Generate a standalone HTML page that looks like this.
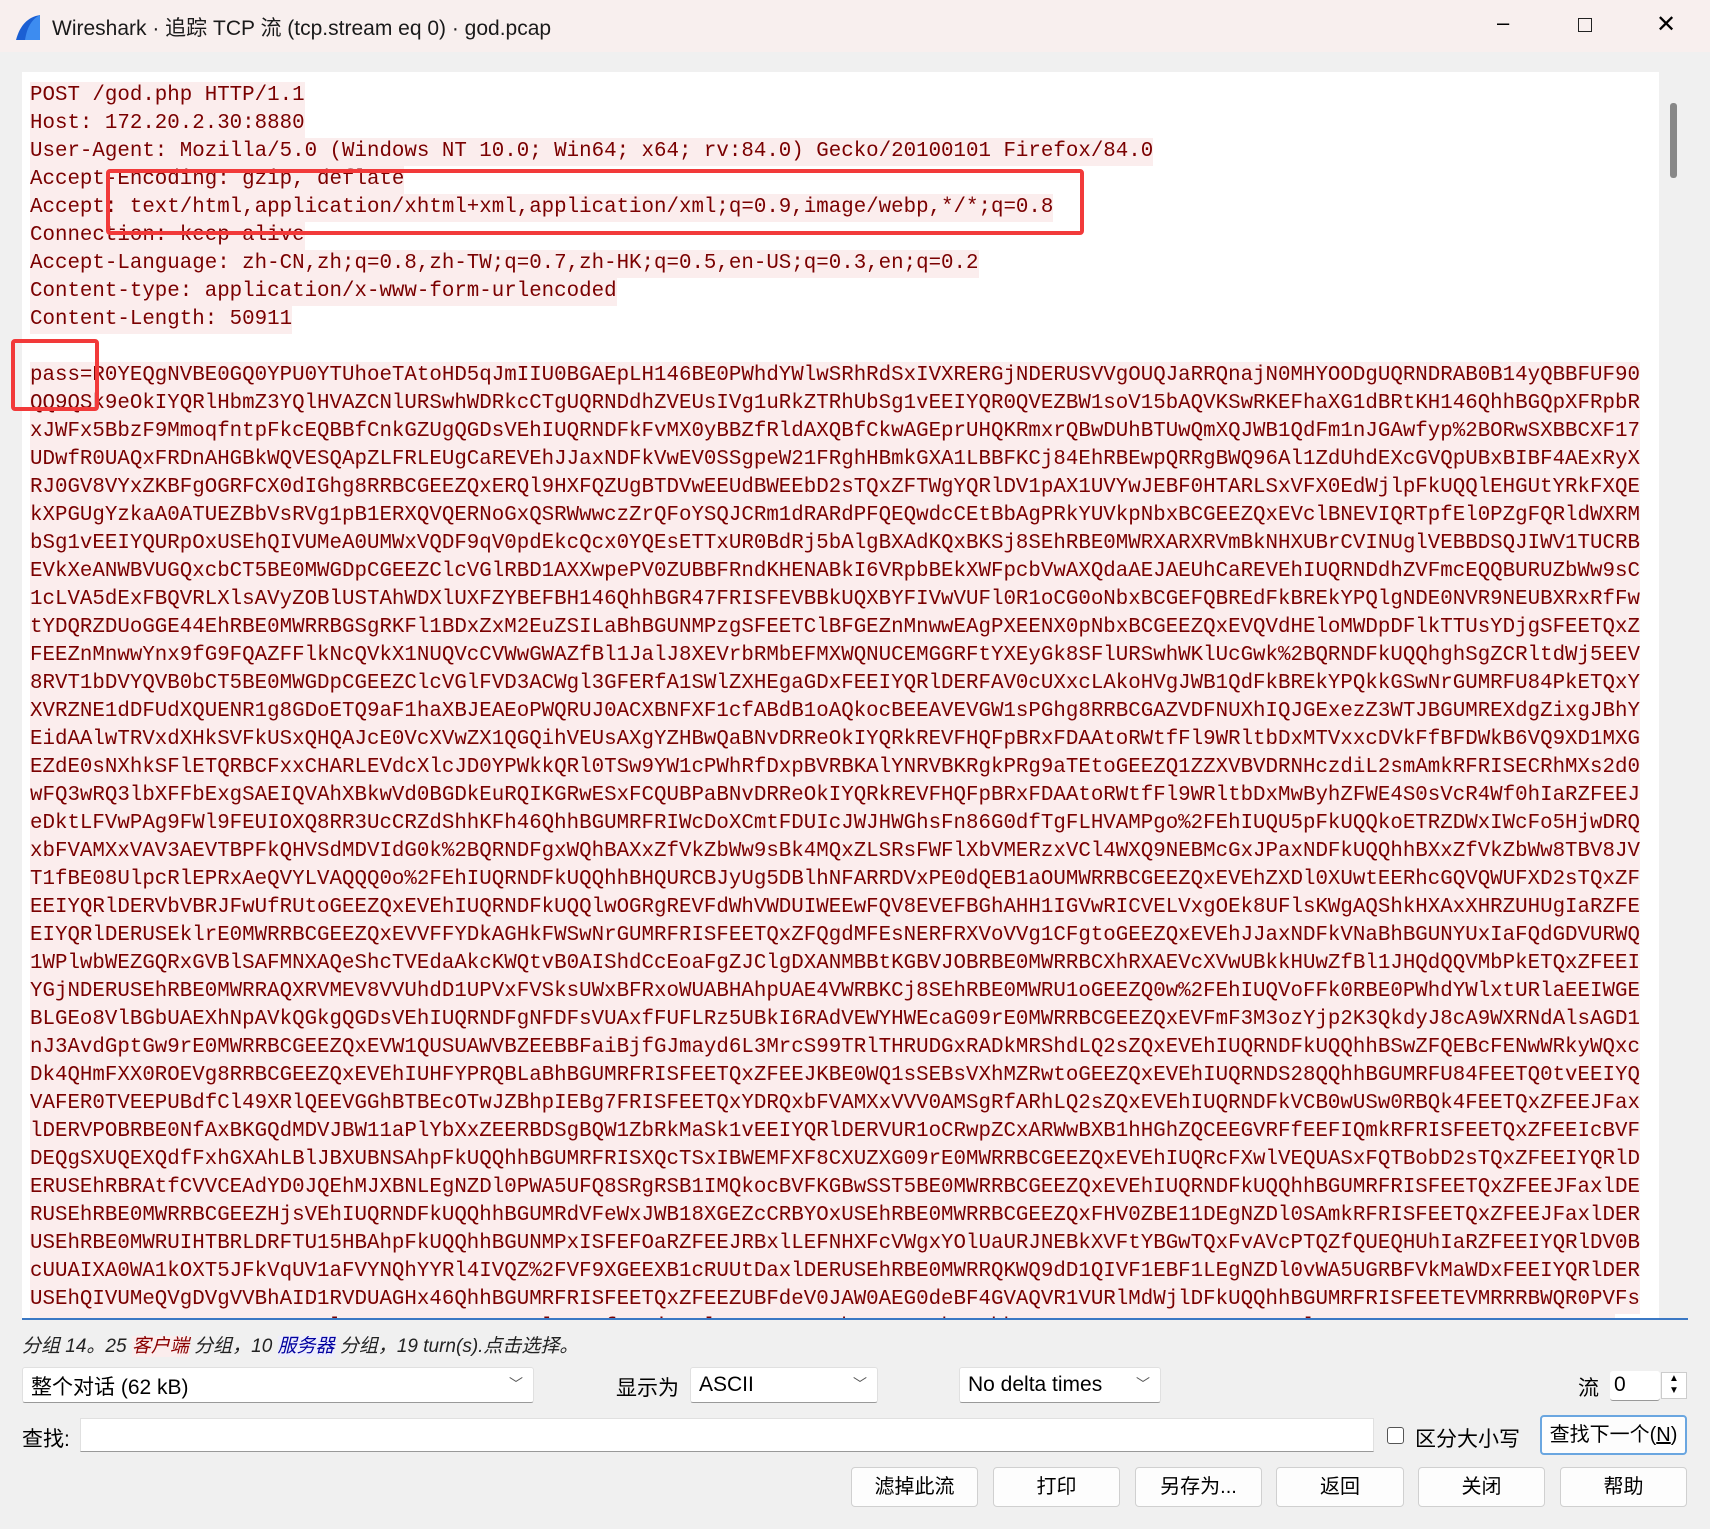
<!DOCTYPE html>
<html><head><meta charset="utf-8">
<style>
*{margin:0;padding:0;box-sizing:border-box}
body{width:1710px;height:1529px;background:#f0f0f0;font-family:"Liberation Sans","Noto Sans CJK SC",sans-serif;position:relative;overflow:hidden;color:#000}
.title{position:absolute;left:0;top:0;width:1710px;height:52px;background:#f8efee;}
.title .t{position:absolute;left:52px;top:12px;font-size:21px;color:#1a1a1a}
.ta{position:absolute;left:22px;top:72px;width:1666px;height:1248px;background:#fff;overflow:hidden;border-bottom:2px solid #3b78c4}
.sb{position:absolute;right:0;top:0;width:29px;height:100%;background:#f0f0f0}
.thumb{position:absolute;left:11px;top:31px;width:7px;height:75px;background:#888;border-radius:3px}
.txt{position:absolute;left:8px;top:10px;font-family:"Liberation Mono",monospace;font-size:20.8px;line-height:28px;color:#7a0000;white-space:pre}
.txt div{display:table;background:#fbeded;height:28px}
.txt div.e{background:transparent}
.box{position:absolute;border:4px solid #f23a3a;border-radius:4px}
.st{position:absolute;left:22px;top:1331px;font-size:19px;font-style:italic;color:#222}
.cb{position:absolute;height:36px;background:#fff;border:1px solid #e0e0e0;border-bottom:1px solid #999;font-size:21px;padding:5px 8px;border-radius:3px}
.cb .ar{position:absolute;right:10px;top:6px;font-size:14px;color:#555}
.lbl{position:absolute;font-size:21px}
.btn{position:absolute;top:1467px;height:40px;background:#fdfdfd;border:1px solid #d0d0d0;border-radius:4px;font-size:20px;text-align:center;line-height:38px}
</style></head><body>
<div class="title">
<svg style="position:absolute;left:14px;top:13px" width="28" height="28" viewBox="0 0 28 28"><path d="M26 2 C14 4 6 12 2 27 L26 27 Z" fill="#1b5fd3"/><path d="M26 2 C18 6 13 14 11 27 L26 27Z" fill="#3d8cf0"/></svg>
<div class="t">Wireshark · 追踪 TCP 流 (tcp.stream eq 0) · god.pcap</div>
<div style="position:absolute;left:1497px;top:10px;font-size:22px">–</div>
<div style="position:absolute;left:1578px;top:18px;width:14px;height:14px;border:1.5px solid #222"></div>
<div style="position:absolute;left:1656px;top:10px;font-size:24px;font-weight:300">✕</div>
</div>
<div class="ta">
<div class="txt"><div>POST /god.php HTTP/1.1</div><div>Host: 172.20.2.30:8880</div><div>User-Agent: Mozilla/5.0 (Windows NT 10.0; Win64; x64; rv:84.0) Gecko/20100101 Firefox/84.0</div><div>Accept-Encoding: gzip, deflate</div><div>Accept: text/html,application/xhtml+xml,application/xml;q=0.9,image/webp,*/*;q=0.8</div><div>Connection: keep-alive</div><div>Accept-Language: zh-CN,zh;q=0.8,zh-TW;q=0.7,zh-HK;q=0.5,en-US;q=0.3,en;q=0.2</div><div>Content-type: application/x-www-form-urlencoded</div><div>Content-Length: 50911</div><div class="e"> </div><div>pass=R0YEQgNVBE0GQ0YPU0YTUhoeTAtoHD5qJmIIU0BGAEpLH146BE0PWhdYWlwSRhRdSxIVXRERGjNDERUSVVgOUQJaRRQnajN0MHYOODgUQRNDRAB0B14yQBBFUF90</div><div>QQ9QSk9eOkIYQRlHbmZ3YQlHVAZCNlURSwhWDRkcCTgUQRNDdhZVEUsIVg1uRkZTRhUbSg1vEEIYQR0QVEZBW1soV15bAQVKSwRKEFhaXG1dBRtKH146QhhBGQpXFRpbR</div><div>xJWFx5BbzF9MmoqfntpFkcEQBBfCnkGZUgQGDsVEhIUQRNDFkFvMX0yBBZfRldAXQBfCkwAGEprUHQKRmxrQBwDUhBTUwQmXQJWB1QdFm1nJGAwfyp%2BORwSXBBCXF17</div><div>UDwfR0UAQxFRDnAHGBkWQVESQApZLFRLEUgCaREVEhJJaxNDFkVwEV0SSgpeW21FRghHBmkGXA1LBBFKCj84EhRBEwpQRRgBWQ96Al1ZdUhdEXcGVQpUBxBIBF4AExRyX</div><div>RJ0GV8VYxZKBFgOGRFCX0dIGhg8RRBCGEEZQxERQl9HXFQZUgBTDVwEEUdBWEEbD2sTQxZFTWgYQRlDV1pAX1UVYwJEBF0HTARLSxVFX0EdWjlpFkUQQlEHGUtYRkFXQE</div><div>kXPGUgYzkaA0ATUEZBbVsRVg1pB1ERXQVQERNoGxQSRWwwczZrQFoYSQJCRm1dRARdPFQEQwdcCEtBbAgPRkYUVkpNbxBCGEEZQxEVclBNEVIQRTpfEl0PZgFQRldWXRM</div><div>bSg1vEEIYQURpOxUSEhQIVUMeA0UMWxVQDF9qV0pdEkcQcx0YQEsETTxUR0BdRj5bAlgBXAdKQxBKSj8SEhRBE0MWRXARXRVmBkNHXUBrCVINUglVEBBDSQJIWV1TUCRB</div><div>EVkXeANWBVUGQxcbCT5BE0MWGDpCGEEZClcVGlRBD1AXXwpePV0ZUBBFRndKHENABkI6VRpbBEkXWFpcbVwAXQdaAEJAEUhCaREVEhIUQRNDdhZVFmcEQQBURUZbWw9sC</div><div>1cLVA5dExFBQVRLXlsAVyZOBlUSTAhWDXlUXFZYBEFBH146QhhBGR47FRISFEVBBkUQXBYFIVwVUFl0R1oCG0oNbxBCGEFQBREdFkBREkYPQlgNDE0NVR9NEUBXRxRfFw</div><div>tYDQRZDUoGGE44EhRBE0MWRRBGSgRKFl1BDxZxM2EuZSILaBhBGUNMPzgSFEETClBFGEZnMnwwEAgPXEENX0pNbxBCGEEZQxEVQVdHEloMWDpDFlkTTUsYDjgSFEETQxZ</div><div>FEEZnMnwwYnx9fG9FQAZFFlkNcQVkX1NUQVcCVWwGWAZfBl1JalJ8XEVrbRMbEFMXWQNUCEMGGRFtYXEyGk8SFlURSwhWKlUcGwk%2BQRNDFkUQQhghSgZCRltdWj5EEV</div><div>8RVT1bDVYQVB0bCT5BE0MWGDpCGEEZClcVGlFVD3ACWgl3GFERfA1SWlZXHEgaGDxFEEIYQRlDERFAV0cUXxcLAkoHVgJWB1QdFkBREkYPQkkGSwNrGUMRFU84PkETQxY</div><div>XVRZNE1dDFUdXQUENR1g8GDoETQ9aF1haXBJEAEoPWQRUJ0ACXBNFXF1cfABdB1oAQkocBEEAVEVGW1sPGhg8RRBCGAZVDFNUXhIQJGExezZ3WTJBGUMREXdgZixgJBhY</div><div>EidAAlwTRVxdXHkSVFkUSxQHQAJcE0VcXVwZX1QGQihVEUsAXgYZHBwQaBNvDRReOkIYQRkREVFHQFpBRxFDAAtoRWtfFl9WRltbDxMTVxxcDVkFfBFDWkB6VQ9XD1MXG</div><div>EZdE0sNXhkSFlETQRBCFxxCHARLEVdcXlcJD0YPWkkQRl0TSw9YW1cPWhRfDxpBVRBKAlYNRVBKRgkPRg9aTEtoGEEZQ1ZZXVBVDRNHczdiL2smAmkRFRISECRhMXs2d0</div><div>wFQ3wRQ3lbXFFbExgSAEIQVAhXBkwVd0BGDkEuRQIKGRwESxFCQUBPaBNvDRReOkIYQRkREVFHQFpBRxFDAAtoRWtfFl9WRltbDxMwByhZFWE4S0sVcR4Wf0hIaRZFEEJ</div><div>eDktLFVwPAg9FWl9FEUIOXQ8RR3UcCRZdShhKFh46QhhBGUMRFRIWcDoXCmtFDUIcJWJHWGhsFn86G0dfTgFLHVAMPgo%2FEhIUQU5pFkUQQkoETRZDWxIWcFo5HjwDRQ</div><div>xbFVAMXxVAV3AEVTBPFkQHVSdMDVIdG0k%2BQRNDFgxWQhBAXxZfVkZbWw9sBk4MQxZLSRsFWFlXbVMERzxVCl4WXQ9NEBMcGxJPaxNDFkUQQhhBXxZfVkZbWw8TBV8JV</div><div>T1fBE08UlpcRlEPRxAeQVYLVAQQQ0o%2FEhIUQRNDFkUQQhhBHQURCBJyUg5DBlhNFARRDVxPE0dQEB1aOUMWRRBCGEEZQxEVEhZXDl0XUwtEERhcGQVQWUFXD2sTQxZF</div><div>EEIYQRlDERVbVBRJFwUfRUtoGEEZQxEVEhIUQRNDFkUQQlwOGRgREVFdWhVWDUIWEEwFQV8EVEFBGhAHH1IGVwRICVELVxgOEk8UFlsKWgAQShkHXAxXHRZUHUgIaRZFE</div><div>EIYQRlDERUSEklrE0MWRRBCGEEZQxEVVFFYDkAGHkFWSwNrGUMRFRISFEETQxZFQgdMFEsNERFRXVoVVg1CFgtoGEEZQxEVEhJJaxNDFkVNaBhBGUNYUxIaFQdGDVURWQ</div><div>1WPlwbWEZGQRxGVBlSAFMNXAQeShcTVEdaAkcKWQtvB0AIShdCcEoaFgZJClgDXANMBBtKGBVJOBRBE0MWRRBCXhRXAEVcXVwUBkkHUwZfBl1JHQdQQVMbPkETQxZFEEI</div><div>YGjNDERUSEhRBE0MWRRAQXRVMEV8VVUhdD1UPVxFVSksUWxBFRxoWUABHAhpUAE4VWRBKCj8SEhRBE0MWRU1oGEEZQ0w%2FEhIUQVoFFk0RBE0PWhdYWlxtURlaEEIWGE</div><div>BLGEo8VlBGbUAEXhNpAVkQGkgQGDsVEhIUQRNDFgNFDFsVUAxfFUFLRz5UBkI6RAdVEWYHWEcaG09rE0MWRRBCGEEZQxEVFmF3M3ozYjp2K3QkdyJ8cA9WXRNdAlsAGD1</div><div>nJ3AvdGptGw9rE0MWRRBCGEEZQxEVW1QUSUAWVBZEEBBFaiBjfGJmayd6L3MrcS99TRlTHRUDGxRADkMRShdLQ2sZQxEVEhIUQRNDFkUQQhhBSwZFQEBcFENwWRkyWQxc</div><div>Dk4QHmFXX0ROEVg8RRBCGEEZQxEVEhIUHFYPRQBLaBhBGUMRFRISFEETQxZFEEJKBE0WQ1sSEBsVXhMZRwtoGEEZQxEVEhIUQRNDS28QQhhBGUMRFU84FEETQ0tvEEIYQ</div><div>VAFER0TVEEPUBdfCl49XRlQEEVGGhBTBEcOTwJZBhpIEBg7FRISFEETQxYDRQxbFVAMXxVVV0AMSgRfARhLQ2sZQxEVEhIUQRNDFkVCB0wUSw0RBQk4FEETQxZFEEJFax</div><div>lDERVPOBRBE0NfAxBKGQdMDVJBW11aPlYbXxZEERBDSgBQW1ZbRkMaSk1vEEIYQRlDERVUR1oCRwpZCxARWwBXB1hHGhZQCEEGVRFfEEFIQmkRFRISFEETQxZFEEIcBVF</div><div>DEQgSXUQEXQdfFxhGXAhLBlJBXUBNSAhpFkUQQhhBGUMRFRISXQcTSxIBWEMFXF8CXUZXG09rE0MWRRBCGEEZQxEVEhIUQRcFXwlVEQUASxFQTBobD2sTQxZFEEIYQRlD</div><div>ERUSEhRBRAtfCVVCEAdYD0JQEhMJXBNLEgNZDl0PWA5UFQ8SRgRSB1IMQkocBVFKGBwSST5BE0MWRRBCGEEZQxEVEhIUQRNDFkUQQhhBGUMRFRISFEETQxZFEEJFaxlDE</div><div>RUSEhRBE0MWRRBCGEEZHjsVEhIUQRNDFkUQQhhBGUMRdVFeWxJWB18XGEZcCRBYOxUSEhRBE0MWRRBCGEEZQxFHV0ZBE11DEgNZDl0SAmkRFRISFEETQxZFEEJFaxlDER</div><div>USEhRBE0MWRUIHTBRLDRFTU15HBAhpFkUQQhhBGUNMPxISFEFOaRZFEEJRBxlLEFNHXFcVWgxYOlUaURJNEBkXVFtYBGwTQxFvAVcPTQZfQUEQHUhIaRZFEEIYQRlDV0B</div><div>cUUAIXA0WA1kOXT5JFkVqUV1aFVYNQhYYRl4IVQZ%2FVF9XGEEXB1cRUUtDaxlDERUSEhRBE0MWRRQKWQ9dD1QIVF1EBF1LEgNZDl0vWA5UGRBFVkMaWDxFEEIYQRlDER</div><div>USEhQIVUMeQVgDVgVVBhAID1RVDUAGHx46QhhBGUMRFRISFEETQxZFEEZUBFdeV0JAW0AEG0deBF4GVAQVR1VURlMdWjlDFkUQQhhBGUMRFRISFEETEVMRRRBWQR0PVFs</div><div>ZQBBBFEQMWRRRBCGEEZQxEVFlZOB1ARWRZVG1ACWgl2HBRfVKAjBQBlYUEEZQxEVEhIUQRNDFkUQQhhBGUMRFRISFEETQxZFEEIYQRlDERVREVVERUZZETQxZFEEIYQ</div></div>
<div class="sb"><div class="thumb"></div></div>
</div>
<div class="box" style="left:106px;top:169px;width:978px;height:66px"></div>
<div class="box" style="left:11px;top:339px;width:88px;height:72px"></div>
<div class="st">分组 14。25 <span style="color:#8a0000;background:#fbeded">客户端</span> 分组，10 <span style="color:#0000a0;background:#ededfb">服务器</span> 分组，19 turn(s).点击选择。</div>
<div class="cb" style="left:22px;top:1367px;width:512px;padding-top:3px">整个对话 (62 kB)<span class="ar">﹀</span></div>
<div class="lbl" style="left:616px;top:1372px">显示为</div>
<div class="cb" style="left:690px;top:1367px;width:188px">ASCII<span class="ar">﹀</span></div>
<div class="cb" style="left:959px;top:1367px;width:202px">No delta times<span class="ar">﹀</span></div>
<div class="lbl" style="left:1578px;top:1372px">流</div>
<div class="cb" style="left:1610px;top:1371px;width:50px;height:30px;padding:2px 4px;border:none;border-bottom:1px solid #999">0</div>
<div style="position:absolute;left:1661px;top:1372px;width:26px;height:27px;background:#fff;border:1px solid #ccc;font-size:10px;line-height:12px;text-align:center">▲<br>▼</div>
<div class="lbl" style="left:22px;top:1423px">查找:</div>
<div style="position:absolute;left:80px;top:1418px;width:1294px;height:34px;background:#fff;border:1px solid #e0e0e0;border-bottom:1px solid #999"></div>
<div style="position:absolute;left:1387px;top:1427px;width:17px;height:17px;border:1px solid #555;border-radius:3px;background:#fff"></div>
<div class="lbl" style="left:1415px;top:1423px">区分大小写</div>
<div class="btn" style="left:1540px;top:1415px;width:147px;border:2px solid #6aa6e0;line-height:36px;font-size:20px">查找下一个(<u>N</u>)</div>
<div class="btn" style="left:851px;width:127px">滤掉此流</div>
<div class="btn" style="left:993px;width:127px">打印</div>
<div class="btn" style="left:1135px;width:127px">另存为...</div>
<div class="btn" style="left:1276px;width:128px">返回</div>
<div class="btn" style="left:1418px;width:127px">关闭</div>
<div class="btn" style="left:1560px;width:127px">帮助</div>
</body></html>
